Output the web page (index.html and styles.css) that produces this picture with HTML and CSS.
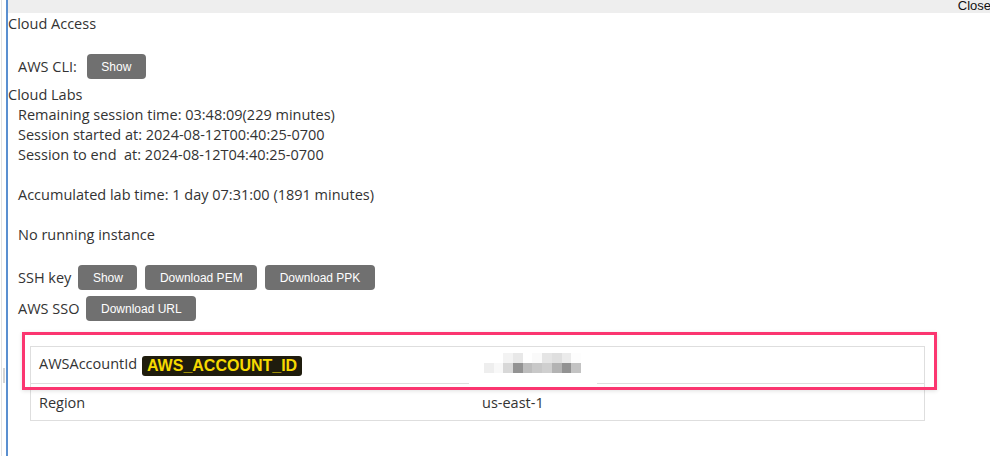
FILE: index.html
```html
<!DOCTYPE html>
<html>
<head>
<meta charset="utf-8">
<title>Cloud Access</title>
<link rel="stylesheet" href="styles.css">
</head>
<body>
<div class="shell">
  <div class="gutter"></div>
  <div class="panel">
    <div class="topbar"><span class="close">Close</span></div>
    <div class="content">
      <div class="heading">Cloud Access</div>
      <div class="row row-cli"><span class="label label-cli">AWS CLI:</span><button class="btn">Show</button></div>
      <div class="heading heading-labs">Cloud Labs</div>
      <div class="info">
        <div class="line">Remaining session time: 03:48:09(229 minutes)</div>
        <div class="line">Session started at: 2024-08-12T00:40:25-0700</div>
        <div class="line">Session to end&nbsp; at: 2024-08-12T04:40:25-0700</div>
        <div class="line blank"></div>
        <div class="line">Accumulated lab time: 1 day 07:31:00 (1891 minutes)</div>
        <div class="line blank"></div>
        <div class="line">No running instance</div>
      </div>
      <div class="row row-ssh"><span class="label label-ssh">SSH key</span><button class="btn">Show</button><button class="btn">Download PEM</button><button class="btn">Download PPK</button></div>
      <div class="row row-sso"><span class="label label-sso">AWS SSO</span><button class="btn">Download URL</button></div>
      <div class="table-wrap">
        <table class="kv">
          <tr>
            <td class="key">AWSAccountId <span class="tag">AWS_ACCOUNT_ID</span></td>
            <td class="val"></td>
          </tr>
          <tr>
            <td class="key">Region</td>
            <td class="val">us-east-1</td>
          </tr>
        </table>
        <div class="redact">
          <div class="pix">
            <i style="background:#fff"></i><i style="background:#fff"></i><i style="background:#f3f3f3"></i><i style="background:#e8e8e8"></i><i style="background:#fff"></i><i style="background:#fafafa"></i><i style="background:#e5e5e5"></i><i style="background:#dfdfdf"></i><i style="background:#ebebeb"></i><i style="background:#fdfdfd"></i>
            <i style="background:#eeeeee"></i><i style="background:#f8f8f8"></i><i style="background:#d8d8d8"></i><i style="background:#939393"></i><i style="background:#bdbdbd"></i><i style="background:#c8c8c8"></i><i style="background:#cfcfcf"></i><i style="background:#b3b3b3"></i><i style="background:#929292"></i><i style="background:#c3c3c3"></i>
          </div>
        </div>
        <div class="highlight"></div>
      </div>
    </div>
  </div>
</div>
</body>
</html>
```
FILE: styles.css
```css
html, body {
  margin: 0;
  padding: 0;
  background: #fff;
  overflow: hidden;
}
body {
  font-family: "Open Sans", "DejaVu Sans", sans-serif;
  font-size: 14.5px;
  color: #333;
}
.shell {
  display: flex;
  height: 456px;
}
.gutter {
  position: relative;
  width: 6px;
  flex: none;
  border-right: 2px solid #5a8fd0;
  background: linear-gradient(to right, #fff 0, #fff 1px, #e2e2e2 1px, #e2e2e2 2px, #fff 2px);
}
.gutter::after {
  content: "";
  position: absolute;
  left: 3px;
  top: 368px;
  width: 2px;
  height: 15px;
  background: #d4d4d4;
}
.panel {
  flex: 1;
  min-width: 0;
}
.topbar {
  height: 13px;
  background: #eeeeee;
  display: flex;
  justify-content: flex-end;
  overflow: hidden;
}
.close {
  font-family: "Liberation Sans", Arial, sans-serif;
  font-size: 13px;
  line-height: 11px;
  color: #111;
  margin-right: -1px;
}
.heading {
  line-height: 20px;
  padding-top: 1px;
  height: 20px;
}
.heading-labs {
  margin-top: 5px;
}
.row {
  display: flex;
  align-items: center;
  padding-left: 10px;
  height: 25px;
}
.row-cli { margin-top: 20px; }
.row-ssh { margin-top: 20px; }
.row-sso { margin-top: 6px; }
.label-cli { margin-right: 10px; }
.label-ssh { margin-right: 7px; }
.label-sso { margin-right: 7px; }
.btn {
  font-family: "Liberation Sans", Arial, sans-serif;
  font-size: 12px;
  color: #fff;
  background: #707070;
  border: none;
  border-radius: 4px;
  height: 25px;
  padding: 0 14.5px;
  margin-right: 8px;
}
.info {
  padding-left: 10px;
}
.line {
  line-height: 20px;
  height: 20px;
}
.table-wrap {
  position: relative;
  margin: 25px 0 0 22px;
  width: 895px;
}
.kv {
  width: 895px;
  border-collapse: collapse;
  border: 1px solid #dedede;
  table-layout: fixed;
}
.kv td {
  height: 36px;
  padding: 0 8px;
  border-bottom: 1px solid #dedede;
  vertical-align: middle;
}
.kv .key {
  width: 427px;
}
.tag {
  display: inline-block;
  margin-left: 1px;
  padding: 0 5px;
  height: 20px;
  line-height: 20px;
  background: #1f1c0d;
  color: #f6d900;
  font-family: "Liberation Sans", Arial, sans-serif;
  font-weight: bold;
  font-size: 16px;
  border-radius: 3px;
  vertical-align: middle;
}
.redact {
  position: absolute;
  left: 439px;
  top: 4px;
  width: 128px;
  height: 34px;
  background: #fff;
}
.pix {
  margin: 3px 0 0 15px;
  display: grid;
  grid-template-columns: repeat(10, 9.7px);
  grid-template-rows: 10px 10px;
}
.pix i {
  display: block;
}
.highlight {
  position: absolute;
  left: -8px;
  top: -14px;
  width: 909px;
  height: 52px;
  border: 3px solid #fb3670;
  box-shadow: 0 1px 4px rgba(0,0,0,0.12);
  pointer-events: none;
}
```
